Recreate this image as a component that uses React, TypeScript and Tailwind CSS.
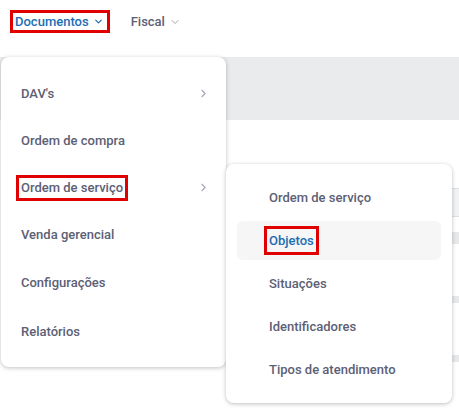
import { ChevronDown, ChevronRight } from "lucide-react";

const mainItems = [
  { label: "DAV's", sub: true },
  { label: "Ordem de compra" },
  { label: "Ordem de serviço", sub: true, marked: true },
  { label: "Venda gerencial" },
  { label: "Configurações", extra: true },
  { label: "Relatórios" },
];

const subItems = [
  { label: "Ordem de serviço" },
  { label: "Objetos", active: true },
  { label: "Situações" },
  { label: "Identificadores" },
  { label: "Tipos de atendimento" },
];

export default function App() {
  return (
    <div className="relative h-[410px] w-[459px] overflow-hidden bg-white font-['Roboto',sans-serif] text-[13px] font-medium text-[#5c6075]">
      {/* top nav */}
      <div className="flex h-[57px] items-start gap-[21px] pl-[10px] pt-[10px]">
        <div className="flex h-[23px] items-center gap-[4px] border-[3px] border-[#e00000] pl-[2px] pr-[3px] text-[#1c6db3]">
          Documentos
          <ChevronDown className="h-[11px] w-[11px]" strokeWidth={2.6} />
        </div>
        <div className="flex h-[23px] items-center gap-1">
          Fiscal
          <ChevronDown className="h-[12px] w-[12px] text-[#a3a6b2]" strokeWidth={2} />
        </div>
      </div>

      {/* page behind the menus */}
      <div className="h-[63px] bg-[#e9ebec]" />
      <div className="ml-auto mt-[68px] h-[29px] w-[40px] border-y border-[#dcdfe1] bg-[#f0f2f3]" />
      <div className="ml-auto mt-[15px] h-[12px] w-[40px] bg-[#e6e8ea]" />
      <div className="ml-auto mt-[52px] h-[7px] w-[40px] bg-[#e6e8ea]" />
      <div className="ml-auto mt-[52px] h-[7px] w-[40px] bg-[#e6e8ea]" />

      {/* first menu */}
      <div className="absolute left-[1px] top-[57px] flex w-[225px] flex-col rounded-[8px] bg-white pb-[12px] pt-[13px] shadow-[0_1px_4px_rgba(0,0,0,0.25)]">
        {mainItems.map((item) => (
          <div
            key={item.label}
            className={
              "flex items-center justify-between pl-[20px] pr-[16px] " + (item.extra ? "h-[50px]" : "h-[47px]")
            }
          >
            <span
              className={
                item.marked
                  ? "-ml-[5px] flex h-[26px] items-center border-[3px] border-[#e00000] px-[2px]"
                  : ""
              }
            >
              {item.label}
            </span>
            {item.sub && <ChevronRight className="h-[13px] w-[13px] text-[#a3a6b2]" strokeWidth={2} />}
          </div>
        ))}
      </div>

      {/* second menu */}
      <div className="absolute left-[226px] top-[164px] flex w-[226px] flex-col gap-[4px] rounded-[8px] bg-white px-[11px] py-[14px] shadow-[0_1px_4px_rgba(0,0,0,0.25)]">
        {subItems.map((item) => (
          <div
            key={item.label}
            className={
              "flex h-[39px] items-center rounded-[6px] pl-[32px] " + (item.active ? "bg-[#f6f6f7]" : "")
            }
          >
            <span
              className={
                item.active
                  ? "-ml-[5px] flex h-[29px] items-center border-[3px] border-[#e00000] px-[2px] text-[#1c6db3]"
                  : ""
              }
            >
              {item.label}
            </span>
          </div>
        ))}
      </div>
    </div>
  );
}
